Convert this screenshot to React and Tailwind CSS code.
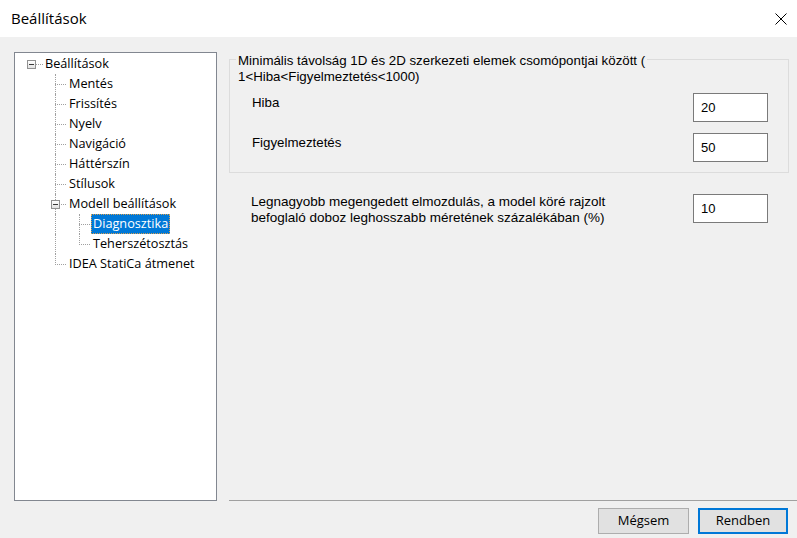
import React from "react";

const LINE = "border-[#a0a0a0]";

function Cell({ kind }) {
  return (
    <div className="relative w-[24px] h-[20px] shrink-0">
      {(kind === "I" || kind === "T" || kind === "Texp") && (
        <div className={`absolute left-[12px] top-0 h-[20px] border-l border-dotted ${LINE}`} />
      )}
      {kind === "L" && (
        <div className={`absolute left-[12px] top-0 h-[11px] border-l border-dotted ${LINE}`} />
      )}
      {(kind === "T" || kind === "L" || kind === "Texp") && (
        <div className={`absolute left-[12px] right-[1px] top-[10px] border-t border-dotted ${LINE}`} />
      )}
      {kind === "root" && (
        <div className={`absolute left-[17px] right-0 top-[10px] border-t border-dotted ${LINE}`} />
      )}
      {(kind === "root" || kind === "Texp") && (
        <div className="absolute left-[8px] top-[6px] w-[9px] h-[9px] border border-[#919191] bg-gradient-to-b from-white to-[#e2e2e2] flex items-center justify-center">
          <div className="w-[5px] h-[1px] bg-[#3a3a3a]" />
        </div>
      )}
    </div>
  );
}

function Row({ cells, label, selected }) {
  return (
    <div className="flex h-[20px] items-stretch">
      {cells.map((c, i) => (
        <Cell key={i} kind={c} />
      ))}
      <div
        className={
          "h-[20px] flex items-center px-[1px] border whitespace-nowrap " +
          (selected
            ? "bg-[#0078d7] text-white border-dotted border-[#d9a050]"
            : "border-transparent text-black")
        }
      >
        {label}
      </div>
    </div>
  );
}

function Field({ value }) {
  return (
    <div className="w-[75px] h-[29px] bg-white border border-[#7a7a7a] flex items-center pl-[7px] text-[13px] text-black shrink-0">
      {value}
    </div>
  );
}

export default function App() {
  const tree = [
    { cells: ["root"], label: "Beállítások" },
    { cells: ["blank", "T"], label: "Mentés" },
    { cells: ["blank", "T"], label: "Frissítés" },
    { cells: ["blank", "T"], label: "Nyelv" },
    { cells: ["blank", "T"], label: "Navigáció" },
    { cells: ["blank", "T"], label: "Háttérszín" },
    { cells: ["blank", "T"], label: "Stílusok" },
    { cells: ["blank", "Texp"], label: "Modell beállítások" },
    { cells: ["blank", "I", "T"], label: "Diagnosztika", selected: true },
    { cells: ["blank", "I", "L"], label: "Teherszétosztás" },
    { cells: ["blank", "L"], label: "IDEA StatiCa átmenet" },
  ];

  return (
    <div
      className="w-[797px] h-[538px] bg-[#f0f0f0] flex flex-col overflow-hidden text-black"
      style={{ fontFamily: '"Open Sans", "Noto Sans", sans-serif' }}
    >
      {/* Title bar */}
      <div className="h-[37px] bg-white flex items-center justify-between pl-[11px] pr-[10px] shrink-0">
        <span className="text-[15px] leading-none">Beállítások</span>
        <svg width="12" height="12" viewBox="0 0 12 12">
          <path d="M0.5 0.5 L11.5 11.5 M11.5 0.5 L0.5 11.5" stroke="#000" strokeWidth="1" />
        </svg>
      </div>

      {/* Body */}
      <div className="flex pt-[15px] pl-[14px] shrink-0">
        {/* Tree */}
        <div className="w-[203px] h-[449px] bg-white border border-[#828790] pt-[1px] pl-[4px] text-[12.7px] shrink-0">
          {tree.map((r, i) => (
            <Row key={i} cells={r.cells} label={r.label} selected={r.selected} />
          ))}
        </div>

        {/* Right column */}
        <div
          className="ml-[12px] w-[568px] h-[449px] flex flex-col text-[12px]"
          style={{ fontFamily: '"Liberation Sans", Arial, sans-serif' }}
        >
          <div className="mt-[7px] mr-[8px] border border-[#dcdcdc] pb-[10px]">
            <div className="-mt-[7px] ml-[6px] w-fit pr-[2px] pl-[2px] bg-[#f0f0f0] leading-[16px] text-[13.3px]">
              Minimális távolság 1D és 2D szerkezeti elemek csomópontjai között (
              <br />
              1&lt;Hiba&lt;Figyelmeztetés&lt;1000)
            </div>
            <div className="mt-[8px] flex justify-between items-start pl-[22px] pr-[20px]">
              <span className="pt-[2px] text-[13.3px] leading-[16px]">Hiba</span>
              <Field value="20" />
            </div>
            <div className="mt-[11px] flex justify-between items-start pl-[22px] pr-[20px]">
              <span className="pt-[2px] text-[13.3px] leading-[16px]">Figyelmeztetés</span>
              <Field value="50" />
            </div>
          </div>

          <div className="mt-[21px] mr-[8px] flex justify-between items-start pl-[22px] pr-[21px]">
            <span className="leading-[16px] text-[13.5px]">
              Legnagyobb megengedett elmozdulás, a model köré rajzolt
              <br />
              befoglaló doboz leghosszabb méretének százalékában (%)
            </span>
            <Field value="10" />
          </div>

          <div className="mt-auto border-t border-[#a0a0a0] h-[1px]" />
        </div>
      </div>

      {/* Buttons */}
      <div className="flex justify-end gap-[9px] pr-[9px] mt-[7px]">
        <button className="w-[91px] h-[26px] bg-[#e1e1e1] border border-[#adadad] text-[13px] flex items-center justify-center">
          Mégsem
        </button>
        <button className="w-[90px] h-[26px] bg-[#e1e1e1] border-2 border-[#0078d7] text-[13px] flex items-center justify-center">
          Rendben
        </button>
      </div>
    </div>
  );
}
